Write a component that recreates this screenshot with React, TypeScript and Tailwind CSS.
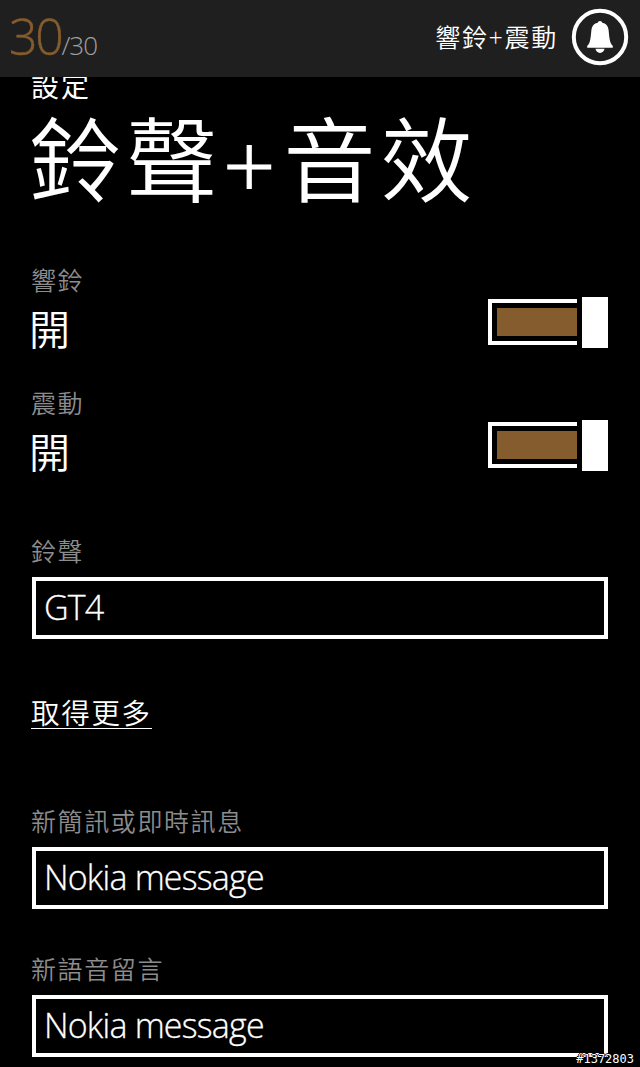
type ToggleItem = {
  label: string;
  state: string;
};

type SoundItem = {
  label: string;
  value: string;
};

const toggles: ToggleItem[] = [
  { label: '響鈴', state: '開' },
  { label: '震動', state: '開' },
];

const messageSounds: SoundItem[] = [
  { label: '新簡訊或即時訊息', value: 'Nokia message' },
  { label: '新語音留言', value: 'Nokia message' },
];

function BellIcon() {
  return (
    <svg viewBox="0 0 58 58" className="h-[58px] w-[58px]" aria-hidden>
      <circle cx="29" cy="29" r="26.2" fill="none" stroke="#fff" strokeWidth="4" />
      <path
        d="M29 13c1.300 0 2 .8 2.200 1.800 3.700.7 6 3.200 6.400 7.200.5 5 .8 9.500 1.900 12.400.6 1.600 1.400 2.500 2.300 3.400v2H16.200v-2c.9-.9 1.700-1.800 2.300-3.400 1.100-2.900 1.400-7.400 1.900-12.400.4-4 2.700-6.500 6.400-7.200.2-1 .9-1.800 2.200-1.800z"
        fill="#fff"
      />
      <path d="M24.500 40.800h9c-.4 2.700-2.200 4.100-4.500 4.100s-4.100-1.400-4.500-4.100z" fill="#fff" />
    </svg>
  );
}

function Toggle() {
  return (
    <div className="flex h-[52px] w-[120px] items-center justify-between" role="switch" aria-checked>
      <div className="h-[46px] w-[89px] border-4 border-r-0 border-white py-[5px] pl-[5px]">
        <div className="h-full bg-[#855c2d]" />
      </div>
      <div className="h-[51px] w-[26px] bg-white" />
    </div>
  );
}

function Label({ children }: { children: React.ReactNode }) {
  return (
    <div className="-ml-px h-[36px] text-[25px] leading-[36px] tracking-[1.6px] whitespace-nowrap text-[#8c8c8c]">
      {children}
    </div>
  );
}

function SelectBox({ value }: { value: string }) {
  return (
    <div className="h-[62px] border-4 border-white pl-[8px] text-[34px] leading-[53px] tracking-[-0.8px] whitespace-nowrap [-webkit-text-stroke:0.3px_#fff]">
      {value}
    </div>
  );
}

export default function App() {
  return (
    <div className="relative h-[1067px] w-[640px] overflow-hidden bg-black font-['Open_Sans','Noto_Sans_CJK_TC',sans-serif] font-[350] text-white">
      <header className="relative z-10 flex h-[77px] items-start justify-between bg-[#1f1f1f] pr-[11px] pl-[9px]">
        <div className="flex items-baseline whitespace-nowrap">
          <span className="text-[50px] leading-[73px] tracking-[-2.3px] text-[#855c2d] [-webkit-text-stroke:0.5px_#855c2d]">
            30
          </span>
          <span className="text-[26px] tracking-[-1px] text-[#a0a0a0]">/30</span>
        </div>
        <div className="flex items-center pt-[8px]">
          <span className="mr-[13px] text-[25px] leading-[58px] tracking-[1.7px]">響鈴+震動</span>
          <BellIcon />
        </div>
      </header>

      <main className="px-8">
        <div className="-mt-[11px] -ml-px h-[39px] text-[28px] leading-[40px] font-normal tracking-[2px]">設定</div>
        <h1 className="-ml-[3px] h-[116px] text-[92px] leading-[110px] tracking-[5px] whitespace-nowrap">
          鈴聲
          <span className="relative top-[5px] mr-[3px] [-webkit-text-stroke:1.2px_#fff]">+</span>
          音效
        </h1>

        <section className="pt-[41px]">
          {toggles.map((t) => (
            <div key={t.label} className="h-[123px]">
              <Label>{t.label}</Label>
              <div className="flex items-start justify-between">
                <span className="-ml-[3px] text-[41px] leading-[63px]">{t.state}</span>
                <div className="-mt-[2px]">
                  <Toggle />
                </div>
              </div>
            </div>
          ))}
        </section>

        <section className="pt-[25px]">
          <Label>鈴聲</Label>
          <div className="pt-[8px]">
            <SelectBox value="GT4" />
          </div>
          <div className="mt-[55px] flex h-[36px]">
            <a className="-ml-px h-[35px] border-b border-white text-[28.5px] leading-[38px] tracking-[1.700px] whitespace-nowrap">
              取得更多
            </a>
          </div>
        </section>

        <section className="pt-[73px]">
          {messageSounds.map((m) => (
            <div key={m.label} className="h-[148px]">
              <Label>{m.label}</Label>
              <div className="pt-[8px]">
                <SelectBox value={m.value} />
              </div>
            </div>
          ))}
        </section>
      </main>

      <span className="absolute right-[6px] bottom-0 font-['DejaVu_Sans_Mono',monospace] text-[12px] leading-[16px] font-normal [text-shadow:1px_0_#000,-1px_0_#000,0_1px_#000,0_-1px_#000]">
        #1372803
      </span>
    </div>
  );
}
